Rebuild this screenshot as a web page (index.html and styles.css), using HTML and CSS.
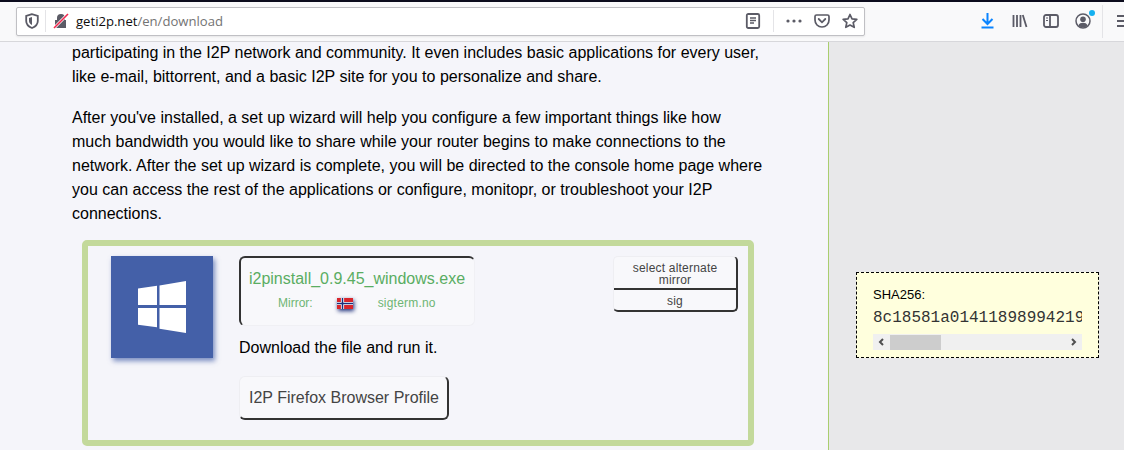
FILE: index.html
```html
<!DOCTYPE html>
<html lang="en">
<head>
<meta charset="utf-8">
<title>Download - I2P</title>
<link rel="stylesheet" href="styles.css">
</head>
<body>
<header class="toolbar">
  <div class="urlbar">
    <svg class="ic shield" viewBox="0 0 16 16"><path d="M8 1.200 2.200 3v5c0 3.300 2.500 5.700 5.800 7 3.300-1.300 5.800-3.700 5.800-7V3z" fill="none" stroke="#5b5b66" stroke-width="1.800"/><path d="M8 4 5 5v3c0 1.800 1.200 3 3 4z" fill="#5b5b66"/></svg>
    <span class="vsep"></span>
    <svg class="ic lock" viewBox="0 0 16 16"><path d="M3 7h1V5a4 4 0 0 1 8 0v2h1v8H2V7z" fill="#5b5b66"/><path d="M1 15 15 1" stroke="#fff" stroke-width="3"/><path d="M1 15 15 1" stroke="#f0284e" stroke-width="1.600"/></svg>
    <span class="url"><span class="host">geti2p.net</span>/en/download</span>
    <svg class="ic reader" viewBox="0 0 16 16"><rect x="1.800" y="1" width="12.400" height="14" rx="1.500" fill="none" stroke="#5b5b66" stroke-width="1.800"/><path d="M5 5h6M5 7.500h6M5 10h4" stroke="#5b5b66" stroke-width="1.300"/></svg>
    <span class="vsep sep2"></span>
    <svg class="ic dots" viewBox="0 0 16 16"><circle cx="2" cy="8" r="1.600" fill="#5b5b66"/><circle cx="8" cy="8" r="1.600" fill="#5b5b66"/><circle cx="14" cy="8" r="1.600" fill="#5b5b66"/></svg>
    <svg class="ic pocket" viewBox="0 0 16 16"><path d="M1 3.500C1 2.500 1.700 2 2.500 2h11c.8 0 1.500.5 1.500 1.500V7c0 4-3 7-7 7S1 11 1 7z" fill="none" stroke="#5b5b66" stroke-width="1.700"/><path d="M4.700 6 8 9.300 11.300 6" fill="none" stroke="#5b5b66" stroke-width="1.800" stroke-linecap="round"/></svg>
    <svg class="ic star" viewBox="0 0 16 16"><path d="m8 1.500 2 4.400 4.800.5-3.600 3.200 1 4.700L8 12l-4.200 2.300 1-4.700L1.200 6.400 6 5.900z" fill="none" stroke="#5b5b66" stroke-width="1.700" stroke-linejoin="round"/></svg>
  </div>
  <div class="tools">
    <svg class="ic dl" viewBox="1.500 0 13 16"><path d="M8 0v10.500M3 6l5 5 5-5" fill="none" stroke="#0a84ff" stroke-width="2"/><path d="M2 14.500h12" stroke="#0a84ff" stroke-width="2"/></svg>
    <svg class="ic lib" viewBox="0 0 16 16"><path d="M1.500 2v12M5 2v12M8.500 2v12M10.800 2l3.700 12" fill="none" stroke="#5b5b66" stroke-width="1.800"/></svg>
    <svg class="ic side" viewBox="0 0 16 16"><rect x="1" y="2" width="14" height="12" rx="2" fill="none" stroke="#5b5b66" stroke-width="1.800"/><path d="M7 2v12" stroke="#5b5b66" stroke-width="1.800"/><path d="M3 5h2M3 7.500h2" stroke="#5b5b66" stroke-width="1.200"/></svg>
    <span class="acct">
      <svg class="ic" viewBox="0 0 16 16"><circle cx="8" cy="8" r="7" fill="none" stroke="#5b5b66" stroke-width="1.500"/><circle cx="8" cy="6.300" r="2.800" fill="#5b5b66"/><path d="M3.300 12.500C4.200 10.500 6 9.800 8 9.800s3.800.7 4.700 2.700A7 7 0 0 1 8 14.500a7 7 0 0 1-4.700-2z" fill="#5b5b66"/></svg>
      <span class="badge"></span>
    </span>
    <span class="vsep sep3"></span>
    <svg class="ic menu" viewBox="0 0 16 16"><path d="M0 3h16M0 8h16M0 13h16" stroke="#5b5b66" stroke-width="1.800"/></svg>
  </div>
</header>
<main class="page">
  <section class="content">
    <p class="first">participating in the I2P network and community. It even includes basic applications for every user, like e-mail, bittorrent, and a basic I2P site for you to personalize and share.</p>
    <p class="second">After you've installed, a set up wizard will help you configure a few important things like how<br>much bandwidth you would like to share while your router begins to make connections to the network. After the set up wizard is complete, you will be directed to the console home page where you can access the rest of the applications or configure, monitopr, or troubleshoot your I2P connections.</p>
    <div class="card">
      <div class="os">
        <svg class="win" viewBox="0 0 48 52"><path d="M0 7.500 19 4.800V24H0zM21.500 4.400 48 0v24H21.500zM0 27h19v19.300L0 43.800zM21.500 27H48v25l-26.500-4.300z" fill="#fff"/></svg>
      </div>
      <div class="mid">
        <a class="dlbtn">
          <span class="fname">i2pinstall_0.9.45_windows.exe</span>
          <span class="mirror"><span>Mirror:</span>
            <svg class="flag" viewBox="0 0 16 11"><rect width="16" height="11" fill="#d8262c"/><path d="M0 5.500h16M5.500 0v11" stroke="#fff" stroke-width="3.200"/><path d="M0 5.500h16M5.500 0v11" stroke="#1c2f7a" stroke-width="1.500"/></svg>
            <span class="mname">sigterm.no</span></span>
        </a>
        <p class="run">Download the file and run it.</p>
        <a class="profile">I2P Firefox Browser Profile</a>
      </div>
      <div class="alt">
        <a class="alt-top">select alternate mirror</a>
        <a class="alt-sig">sig</a>
      </div>
    </div>
  </section>
  <aside class="side-col">
    <div class="sha">
      <div class="sha-label">SHA256:</div>
      <div class="hash">8c18581a0141189899421939f4b0f9a5d1c7b3e8</div>
      <div class="scroll">
        <svg class="arrow" viewBox="0 0 8 8"><path d="M6 1 3 4l3 3" fill="none" stroke="#505050" stroke-width="2"/></svg>
        <span class="thumb"></span>
        <svg class="arrow right" viewBox="0 0 8 8"><path d="m2 1 3 3-3 3" fill="none" stroke="#505050" stroke-width="2"/></svg>
      </div>
    </div>
  </aside>
</main>
</body>
</html>
```
FILE: styles.css
```css
* { box-sizing: border-box; }
html, body { margin: 0; height: 450px; overflow: hidden; }
body { font-family: "Liberation Sans", Arial, sans-serif; font-size: 16px; line-height: 24px; color: #000; background: #f5f5fa; }
.toolbar { height: 42px; background: #f9f9fa; border-top: 2px solid #0c0c1d; border-bottom: 1px solid #d7d7db; display: flex; align-items: center; padding-left: 16px; position: relative; z-index: 1; }
.ic { width: 16px; height: 16px; display: block; flex: none; }
.urlbar { width: 849px; flex: none; height: 29px; margin-top: -1px; background: #fff; border: 1px solid #c0c0c4; border-radius: 2px; box-shadow: 0 1px 2px rgba(0,0,0,.08); display: flex; align-items: center; padding-left: 7px; }
.vsep { width: 1px; height: 22px; background: #e4e4e7; flex: none; margin-left: 5px; }
.lock { margin-left: 7px; }
.url { font-family: "Open Sans", sans-serif; font-size: 13.1px; color: #737373; margin-left: 7px; flex: 1; }
.host { color: #0c0c0d; }
.sep2 { margin-left: 12px; }
.dots { margin-left: 12px; }
.pocket { margin-left: 12px; }
.star { margin-left: 12px; margin-right: 6px; }
.tools { display: flex; align-items: center; margin-left: 116px; margin-top: -1px; flex: none; }
.dl { width: 13px; height: 16px; }
.lib { margin-left: 18px; }
.side { margin-left: 15px; }
.acct { position: relative; margin-left: 16px; }
.badge { position: absolute; width: 6px; height: 6px; border-radius: 50%; background: #14b0f0; top: -3px; right: -4px; }
.sep3 { margin-left: 11px; height: 33px; }
.menu { margin-left: 14px; }
.page { display: flex; height: 408px; overflow: hidden; }
.content { width: 829px; flex: none; padding: 0 56px 0 72px; border-right: 1px solid #a9cd6f; background: #f5f5fa; }
.content p { margin: 0 0 17px; }
.content .first { margin-top: -1px; }
.content .second { margin-bottom: 14px; }
.card { width: 672px; height: 206px; margin: 0 0 0 10px; border: 6px solid #c3d99b; border-radius: 5px; display: flex; align-items: flex-start; padding: 10px 10px 0 23px; }
.os { width: 102px; height: 102px; background: #4460a8; box-shadow: 2px 3px 5px rgba(68,96,168,.7); display: flex; align-items: center; justify-content: center; flex: none; }
.win { width: 48px; height: 52px; display: block; }
.mid { margin-left: 26px; width: 236px; flex: none; }
.dlbtn { display: block; height: 70px; background: #f8f8fb; border: 2px solid #333; border-right: 1px solid #f0f0f4; border-bottom: 1px solid #f0f0f4; border-radius: 6px; padding-top: 9px; text-align: center; }
.fname { display: block; color: #5aad62; font-size: 16px; line-height: 24px; margin-right: 1px; }
.mirror { display: flex; color: #6eb574; font-size: 12px; line-height: 16px; margin-top: 4px; padding-left: 37px; align-items: center; }
.mname { letter-spacing: .2px; }
.flag { width: 16px; height: 11px; margin-left: 24px; margin-right: 25px; filter: drop-shadow(1px 2px 2px #1c2f7a); }
.content .run { margin: 10px 0 0; line-height: 24px; }
.profile { display: inline-block; margin-top: 16px; height: 44px; padding: 9px 8px 0 9px; background: #f8f8fb; color: #444; border: 2px solid #333; border-left: 1px solid #eeeef2; border-top: 1px solid #eeeef2; border-radius: 6px; white-space: nowrap; }
.alt { margin-left: 138px; width: 125px; height: 56px; flex: none; border: 2px solid #333; border-left: 1px solid #eeeef2; border-top: 1px solid #eeeef2; border-radius: 5px; background: #f8f8fb; color: #444; font-size: 12px; line-height: 12px; text-align: center; letter-spacing: .2px; }
.alt-top { display: block; height: 33px; padding: 5px 8px 0; border-bottom: 2px solid #333; }
.alt-sig { display: block; padding-top: 5px; }
.side-col { flex: 1; background: #e8e8ea; padding: 230px 25px 0 27px; }
.sha { width: 243px; height: 86px; background: #ffffdd; border: 1px dashed #000; padding: 13px 16px 0; font-size: 13px; line-height: 18px; }
.hash { font-family: "Liberation Mono", monospace; font-size: 16px; line-height: 18px; margin-top: 5px; overflow: hidden; white-space: nowrap; color: #333; }
.scroll { margin-top: 7px; height: 16px; background: #f0f0f0; display: flex; align-items: center; padding-left: 4px; padding-right: 4px; }
.arrow { width: 8px; height: 8px; flex: none; }
.arrow.right { margin-left: auto; }
.thumb { width: 51px; height: 15px; background: #cdcdcd; margin-left: 5px; }
```
